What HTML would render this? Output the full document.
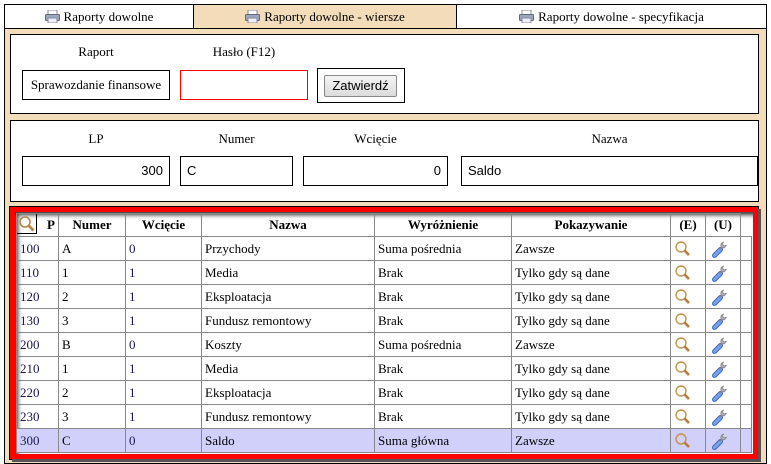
<!DOCTYPE html>
<html><head><meta charset="utf-8"><style>
*{box-sizing:border-box;margin:0;padding:0}
body{width:771px;height:464px;background:#fff;font-family:"Liberation Serif",serif;font-size:13px;color:#000;position:relative;overflow:hidden}
.a{position:absolute}
.tab{position:absolute;top:4px;height:25px;border:1px solid #000;text-align:center;line-height:23px;font-size:13px}
.pr{display:inline-block;width:15px;height:13px;vertical-align:-2px;margin-right:4px}
.box{position:absolute;background:#fff;border:1px solid #000}
.inp{position:absolute;border:1px solid #000;background:#fff;font-family:"Liberation Sans",sans-serif;font-size:13px;line-height:28px;padding:0 6px}
.lbl{position:absolute;font-size:13px;text-align:center}
table{border-collapse:collapse;position:absolute;left:16px;top:213px;width:735px;table-layout:fixed}
td,th{border:1px solid #888;height:24px;padding:0 3px;font-size:13px;white-space:nowrap;overflow:hidden}
th{font-weight:bold;text-align:center;height:23px}
td{color:#000}
td.n{color:#1a1a50}
tr.sel td{background:#d0d0fa}
</style></head><body>
<div class="a" style="left:4px;top:4px;width:763px;height:460px;background:#f2dcba;border:1px solid #000"></div>
<div class="tab" style="left:4px;width:190px;background:#fff"><svg class="pr" viewBox="0 0 15 13"><rect x="3" y="0" width="9" height="5" fill="#fff" stroke="#889"/><rect x="0.5" y="4.5" width="14" height="6" rx="1" fill="#9aa8c0" stroke="#667"/><rect x="3" y="8" width="9" height="5" fill="#eef" stroke="#889"/></svg>Raporty dowolne</div>
<div class="tab" style="left:193px;width:264px;background:#f2dcba"><svg class="pr" viewBox="0 0 15 13"><rect x="3" y="0" width="9" height="5" fill="#fff" stroke="#889"/><rect x="0.5" y="4.5" width="14" height="6" rx="1" fill="#9aa8c0" stroke="#667"/><rect x="3" y="8" width="9" height="5" fill="#eef" stroke="#889"/></svg>Raporty dowolne - wiersze</div>
<div class="tab" style="left:456px;width:311px;background:#fff"><svg class="pr" viewBox="0 0 15 13"><rect x="3" y="0" width="9" height="5" fill="#fff" stroke="#889"/><rect x="0.5" y="4.5" width="14" height="6" rx="1" fill="#9aa8c0" stroke="#667"/><rect x="3" y="8" width="9" height="5" fill="#eef" stroke="#889"/></svg>Raporty dowolne - specyfikacja</div>

<div class="box" style="left:10px;top:34px;width:749px;height:80px"></div>
<div class="lbl" style="left:22px;top:44px;width:148px">Raport</div>
<div class="lbl" style="left:180px;top:44px;width:128px">Hasło (F12)</div>
<div class="box" style="left:22px;top:70px;width:148px;height:30px;text-align:center;line-height:28px;font-size:13px">Sprawozdanie finansowe</div>
<div class="box" style="left:180px;top:70px;width:128px;height:30px;border-color:#f00"></div>
<div class="box" style="left:317px;top:68px;width:88px;height:35px"></div>
<div class="a" style="left:324px;top:75px;width:73px;height:22px;border:1px solid #888;border-radius:2px;background:linear-gradient(#f4f4f4,#dcdcdc);font-family:'Liberation Sans',sans-serif;font-size:13px;text-align:center;line-height:20px">Zatwierdź</div>

<div class="box" style="left:10px;top:120px;width:749px;height:82px"></div>
<div class="lbl" style="left:22px;top:131px;width:148px">LP</div>
<div class="lbl" style="left:180px;top:131px;width:113px">Numer</div>
<div class="lbl" style="left:303px;top:131px;width:145px">Wcięcie</div>
<div class="lbl" style="left:461px;top:131px;width:297px">Nazwa</div>
<div class="inp" style="left:22px;top:156px;width:148px;height:30px;text-align:right">300</div>
<div class="inp" style="left:180px;top:156px;width:113px;height:30px">C</div>
<div class="inp" style="left:303px;top:156px;width:145px;height:30px;text-align:right">0</div>
<div class="inp" style="left:461px;top:156px;width:297px;height:30px">Saldo</div>

<div class="a" style="left:10px;top:207px;width:748px;height:252px;border:5px solid #f00;outline:1px solid #000;background:#fff;box-shadow:inset 3px 3px 4px #333"></div>
<div class="a" style="left:758px;top:209px;width:3px;height:252px;background:#555"></div>
<div class="a" style="left:12px;top:459px;width:749px;height:3px;background:#555"></div>
<table>
<colgroup><col style="width:42px"><col style="width:67px"><col style="width:76px"><col style="width:173px"><col style="width:137px"><col style="width:159px"><col style="width:35px"><col style="width:35px"><col style="width:11px"></colgroup>
<tr><th style="text-align:right;position:relative"><span style="position:absolute;left:0;top:0;width:20px;height:20px;border:1px solid #000;border-left:none;border-top:none"></span><svg class="a" style="left:1px;top:1px" width="18" height="18" viewBox="0 0 18 18"><circle cx="7" cy="7" r="5" fill="none" stroke="#b8884a" stroke-width="1.6"/><path d="M10.5 10.5l5 5" stroke="#b8884a" stroke-width="2.8"/></svg>P</th><th>Numer</th><th>Wcięcie</th><th>Nazwa</th><th>Wyróżnienie</th><th>Pokazywanie</th><th>(E)</th><th>(U)</th><th style="border-top:none;border-right:none"></th></tr>
<tr><td class="n">100</td><td>A</td><td class="n">0</td><td>Przychody</td><td>Suma pośrednia</td><td>Zawsze</td><td class="e"></td><td class="u"></td><td></td></tr>
<tr><td class="n">110</td><td>1</td><td class="n">1</td><td>Media</td><td>Brak</td><td>Tylko gdy są dane</td><td class="e"></td><td class="u"></td><td></td></tr>
<tr><td class="n">120</td><td>2</td><td class="n">1</td><td>Eksploatacja</td><td>Brak</td><td>Tylko gdy są dane</td><td class="e"></td><td class="u"></td><td></td></tr>
<tr><td class="n">130</td><td>3</td><td class="n">1</td><td>Fundusz remontowy</td><td>Brak</td><td>Tylko gdy są dane</td><td class="e"></td><td class="u"></td><td></td></tr>
<tr><td class="n">200</td><td>B</td><td class="n">0</td><td>Koszty</td><td>Suma pośrednia</td><td>Zawsze</td><td class="e"></td><td class="u"></td><td></td></tr>
<tr><td class="n">210</td><td>1</td><td class="n">1</td><td>Media</td><td>Brak</td><td>Tylko gdy są dane</td><td class="e"></td><td class="u"></td><td></td></tr>
<tr><td class="n">220</td><td>2</td><td class="n">1</td><td>Eksploatacja</td><td>Brak</td><td>Tylko gdy są dane</td><td class="e"></td><td class="u"></td><td></td></tr>
<tr><td class="n">230</td><td>3</td><td class="n">1</td><td>Fundusz remontowy</td><td>Brak</td><td>Tylko gdy są dane</td><td class="e"></td><td class="u"></td><td></td></tr>
<tr class="sel"><td class="n">300</td><td>C</td><td class="n">0</td><td>Saldo</td><td>Suma główna</td><td>Zawsze</td><td class="e"></td><td class="u"></td><td></td></tr>
</table>
<script>
var E='<svg width="18" height="18" viewBox="0 0 18 18" style="display:block;margin-left:0"><circle cx="7" cy="7" r="5" fill="none" stroke="#c8904a" stroke-width="1.4"/><path d="M10.5 10.5l4.5 4.5" stroke="#b87a3a" stroke-width="2.6"/></svg>';
var U='<svg width="18" height="18" viewBox="0 0 18 18" style="display:block;margin-left:2px"><path d="M3.5 15.5l6-6" stroke="#3a68c0" stroke-width="5" stroke-linecap="round"/><path d="M3.5 15.5l6-6" stroke="#7aa4e8" stroke-width="3" stroke-linecap="round"/><path d="M9 10l-1-1 3-3 1 1z" fill="#888"/><path d="M10.5 7.5a3.5 3.5 0 0 1 2-5.5l-1 2.2 1.8 1.8 2.2-1a3.5 3.5 0 0 1-5 2.5z" fill="#b0b0b0" stroke="#777" stroke-width="0.6"/></svg>';
document.querySelectorAll('td.e').forEach(function(t){t.innerHTML=E});
document.querySelectorAll('td.u').forEach(function(t){t.innerHTML=U});
</script>
</body></html>
